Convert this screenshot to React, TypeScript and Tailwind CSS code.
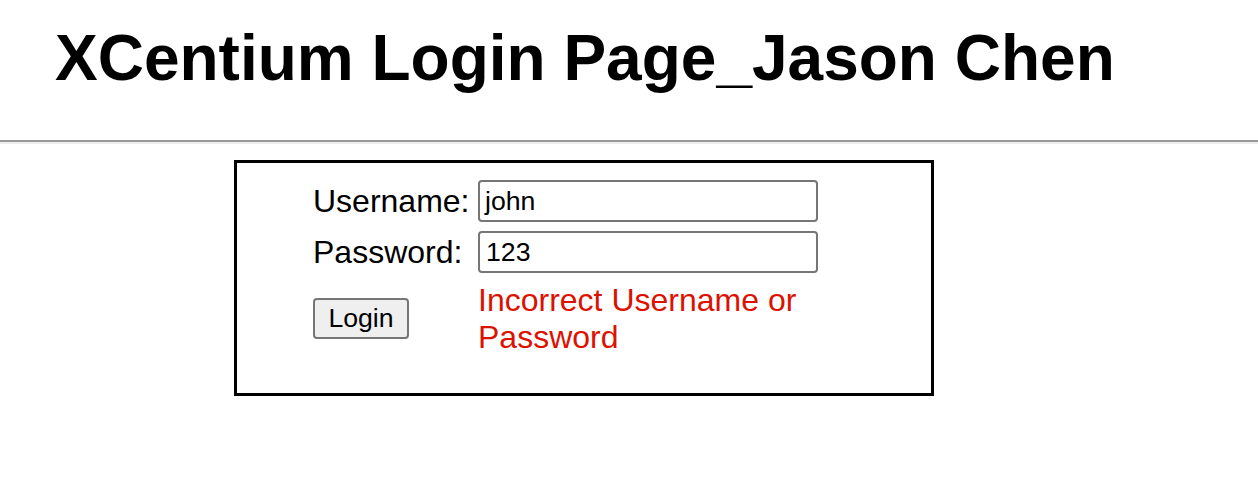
import React from "react";

export default function App() {
  return (
    <div className="min-h-[498px] w-full bg-white text-black font-['Liberation_Sans',Arial,sans-serif]">
      <div className="pl-[55px] pt-[22px] h-[140px]">
        <h1 className="text-[64px] font-bold leading-[73.5px] m-0">XCentium Login Page_Jason Chen</h1>
      </div>
      <div className="border-t-2 border-b-2 border-t-[#9a9a9a] border-b-[#eeeeee] h-[4px]" />
      <div className="mt-[16px] ml-[234px] w-[700px] h-[236px] border-[3px] border-black pl-[76px] pt-[17px]">
        <div className="grid grid-cols-[165px_340px] gap-y-[9px] items-center">
          <label className="text-[32px] leading-[36.8px]">Username:</label>
          <div className="h-[42px] border-2 border-[#767676] rounded-[4px] pl-[5px] flex items-center text-[26.67px] leading-none">
            john
          </div>
          <label className="text-[32px] leading-[36.8px]">Password:</label>
          <div className="h-[42px] border-2 border-[#767676] rounded-[4px] pl-[6px] flex items-center text-[26.67px] leading-none">
            123
          </div>
          <div>
            <button className="w-[96px] h-[41px] bg-[#efefef] border-2 border-[#767676] rounded-[4px] text-[26.67px] leading-none flex items-center justify-center">
              Login
            </button>
          </div>
          <div className="text-[32px] leading-[36.8px] text-[#dd1100]">Incorrect Username or Password</div>
        </div>
      </div>
    </div>
  );
}
